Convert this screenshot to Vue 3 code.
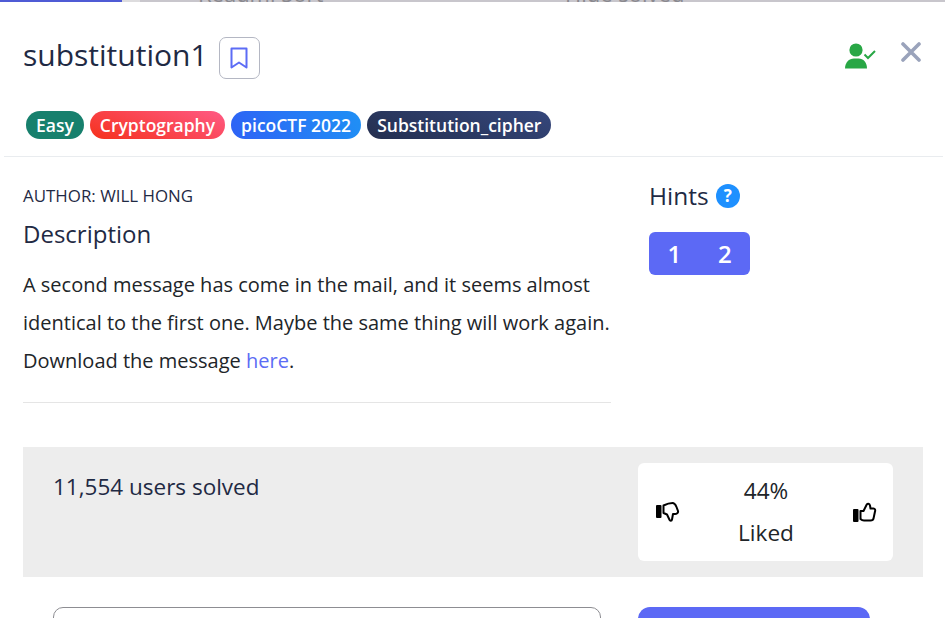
<script setup>
const tags = [
  { label: 'Easy', cls: 'easy' },
  { label: 'Cryptography', cls: 'crypto' },
  { label: 'picoCTF 2022', cls: 'event' },
  { label: 'Substitution_cipher', cls: 'topic' }
]
const hints = [1, 2]
</script>

<template>
  <div class="page">
    <div class="behind">
      <div class="strip">
        <div class="progress"></div>
        <div class="progress-end"></div>
      </div>
      <span class="behind-left">Readmi Sort</span>
      <span class="behind-right">Hide solved</span>
    </div>

    <header class="head">
      <div class="title-wrap">
        <h1>substitution1</h1>
        <button class="bookmark" aria-label="Bookmark">
          <svg width="18" height="22" viewBox="0 0 18 22" fill="none" stroke="#5c6cf5" stroke-width="2" stroke-linejoin="round">
            <path d="M1.500 1.500h15v19L9 15.500l-7.500 5z" />
          </svg>
        </button>
      </div>
      <div class="head-icons">
        <svg class="user" width="32" height="26" viewBox="0 0 32 26">
          <circle cx="11" cy="7" r="6.600" fill="#28a745" />
          <path d="M0 25.500c0-6 4-10 9-10h4.500c5 0 8.500 4 8.500 10z" fill="#28a745" />
          <path d="M19.500 11.500l3.500 3.500 7-7" fill="none" stroke="#28a745" stroke-width="2" />
        </svg>
        <svg class="close" width="20" height="20" viewBox="0 0 20 20">
          <path d="M2 2l16 16M18 2L2 18" stroke="#9aa3bb" stroke-width="3.600" stroke-linecap="round" />
        </svg>
      </div>
    </header>

    <div class="tags">
      <span v-for="t in tags" :key="t.label" class="tag" :class="t.cls">{{ t.label }}</span>
    </div>

    <div class="columns">
      <section class="left">
        <div class="author">AUTHOR: WILL HONG</div>
        <h2>Description</h2>
        <p>
          A second message has come in the mail, and it seems almost identical to the first one. Maybe the same thing will work again.
          Download the message <a href="#">here</a>.
        </p>
      </section>
      <section class="right">
        <div class="hints-title">
          <span>Hints</span>
          <span class="help">?</span>
        </div>
        <div class="hint-buttons">
          <span v-for="h in hints" :key="h">{{ h }}</span>
        </div>
      </section>
    </div>

    <div class="stats">
      <div class="solved">11,554 users solved</div>
      <div class="likes">
        <svg class="thumb-down" width="24" height="22" viewBox="0 0 24 22" fill="none" stroke="#000" stroke-width="2" stroke-linejoin="round">
          <rect x="0" y="3" width="5.500" height="13" rx="1" fill="#000" stroke="none" />
          <path d="M7.500 3.500c3-1.500 6-2.500 9-2.500 2 0 3 1.500 4 4l1.500 4c.5 2-1.500 3-3 3h-2l-1 5.500c-.3 1.500-2 1.500-2.500.3L11 12.500l-3.500-1.500z" />
        </svg>
        <div class="like-text">
          <div>44%</div>
          <div>Liked</div>
        </div>
        <svg class="thumb-up" width="24" height="22" viewBox="0 0 24 22" fill="none" stroke="#000" stroke-width="2" stroke-linejoin="round">
          <rect x="0" y="8" width="5.500" height="13" rx="1" fill="#000" stroke="none" />
          <path d="M7.500 10l3 0 3-6c.7-2 3-1.500 3.500.5l.5 3h3c1.500 0 2 1.500 1.500 3l-1.500 7c-.3 1.500-1.500 2-3 2H11c-1.500 0-2.500-.5-3.500-1.500z" />
        </svg>
      </div>
    </div>

    <div class="answer">
      <div class="input"></div>
      <div class="submit"></div>
    </div>
  </div>
</template>

<style>
html, body {
  margin: 0;
  background: #fff;
  overflow: hidden;
}
</style>

<style scoped>
.page {
  position: relative;
  width: 945px;
  height: 618px;
  overflow: hidden;
  background: #fff;
  font-family: "Open Sans", "Noto Sans", sans-serif;
  color: #212529;
}

.behind {
  position: relative;
  height: 3px;
  margin-bottom: -1px;
  overflow: hidden;
}

.strip {
  display: flex;
  height: 2px;
  background: #c8c6cc;
}

.progress {
  width: 122px;
  background: #4f5bd5;
}

.progress-end {
  width: 18px;
  background: #dddcde;
}

.behind-left, .behind-right {
  position: absolute;
  top: -22px;
  font-size: 22px;
  line-height: 30px;
  color: #8a898f;
}

.behind-left { left: 198px; }
.behind-right { left: 565px; }

.head {
  display: flex;
  align-items: flex-start;
  justify-content: space-between;
  padding: 35px 24px 0 23px;
  height: 42px;
}

.title-wrap {
  display: flex;
  align-items: flex-start;
  gap: 11px;
}

h1 {
  margin: 0;
  font-size: 30px;
  font-weight: 400;
  line-height: 36px;
  color: #1f2a44;
}

.bookmark {
  width: 41px;
  height: 42px;
  padding: 0;
  display: flex;
  align-items: center;
  justify-content: center;
  background: #fff;
  border: 1px solid #b4b7c3;
  border-radius: 7px;
}

.head-icons {
  display: flex;
  align-items: flex-start;
  gap: 24px;
}

.user { margin-top: 6px; }
.close { margin-top: 5px; }

.tags {
  display: flex;
  gap: 6px;
  margin: 32px 2px 0 4px;
  padding: 0 0 17px 22px;
  border-bottom: 1px solid #e9ecef;
}

.tag {
  height: 28px;
  line-height: 28px;
  padding: 0 10px;
  border-radius: 14px;
  font-size: 17.500px;
  font-weight: 600;
  color: #fff;
}

.easy { background: #17806d; }
.crypto { background: linear-gradient(20deg, #f5311c, #ff5a85); }
.event { background: linear-gradient(70deg, #2e62f5, #1f90f5); }
.topic { background: linear-gradient(20deg, #242f4f, #35477c); }

.columns {
  display: flex;
  padding: 0 23px;
  margin-top: 27px;
}

.left {
  width: 588px;
  height: 218px;
  border-bottom: 1px solid #e5e5e5;
}

.author {
  font-size: 16.900px;
  line-height: 24px;
  color: #1f2a44;
}

h2 {
  margin: 11px 0 0;
  font-size: 24px;
  font-weight: 400;
  line-height: 29px;
  color: #1f2a44;
}

p {
  margin: 18px 0 0;
  font-size: 20px;
  line-height: 38px;
  color: #212529;
}

a {
  color: #5c6cf5;
  text-decoration: none;
}

.right {
  margin: -2px 0 0 38px;
}

.hints-title {
  display: flex;
  align-items: center;
  gap: 7px;
  font-size: 24.500px;
  line-height: 28px;
  color: #1f2a44;
}

.help {
  width: 24px;
  height: 24px;
  border-radius: 50%;
  background: #1e90ff;
  color: #fff;
  font-size: 17px;
  font-weight: 700;
  line-height: 24px;
  text-align: center;
}

.hint-buttons {
  display: flex;
  width: 101px;
  height: 43px;
  margin-top: 22px;
  background: #5c69f5;
  border-radius: 6px;
  color: #fff;
  font-size: 24px;
  font-weight: 600;
  line-height: 43px;
}

.hint-buttons span {
  flex: 1;
  text-align: center;
}

.stats {
  display: flex;
  justify-content: space-between;
  width: 900px;
  height: 130px;
  margin: 44px 0 0 23px;
  box-sizing: border-box;
  padding: 16px 30px;
  background: #ededed;
}

.solved {
  font-size: 22.500px;
  line-height: 48px;
  color: #1f2a44;
}

.likes {
  display: flex;
  align-items: center;
  justify-content: space-between;
  width: 255px;
  height: 98px;
  box-sizing: border-box;
  padding: 0 16px 0 18px;
  background: #fff;
  border-radius: 6px;
}

.like-text {
  text-align: center;
  font-size: 22.600px;
  line-height: 42px;
  color: #212529;
  margin: -1px 1px 0 0;
}

.thumb-down { margin-top: 1px; }
.thumb-up { margin-top: -1px; }

.answer {
  display: flex;
  justify-content: space-between;
  margin: 30px 75px 0 53px;
}

.input {
  width: 546px;
  height: 50px;
  border: 1px solid #8d8d92;
  border-radius: 10px;
}

.submit {
  width: 232px;
  height: 50px;
  background: #5c69f5;
  border-radius: 12px;
}
</style>
